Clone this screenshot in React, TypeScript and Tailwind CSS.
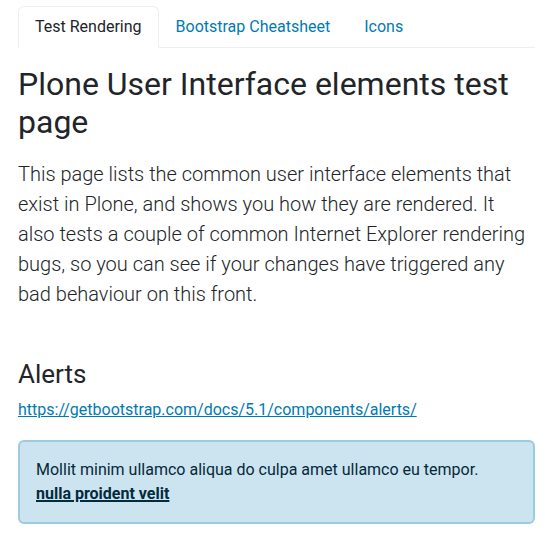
export default function App() {
  const tabs = ['Test Rendering', 'Bootstrap Cheatsheet', 'Icons'];
  return (
    <div className="min-h-screen bg-white pl-[18px] pr-[10px] pt-[6px] text-[#212529]" style={{ fontFamily: 'Roboto, "Liberation Sans", sans-serif' }}>
      {/* Tabs */}
      <ul className="flex border-b border-[#eeeeee]">
        {tabs.map((t, i) => (
          <li key={t} className="-mb-px">
            <a
              href="#"
              className={
                i === 0
                  ? 'block rounded-t-[6px] border border-[#eeeeee] border-b-white bg-white px-4 py-2 text-base leading-6 text-[#212529]'
                  : 'block border border-transparent px-4 py-2 text-base leading-6 text-[#007bb1]'
              }
            >
              {t}
            </a>
          </li>
        ))}
      </ul>

      <h1 className="mt-[17px] text-[32px] leading-[38px] font-normal text-[#212529]">
        Plone User Interface elements test page
      </h1>

      <p className="mt-[18px] text-[20px] leading-[30px] font-light text-[#212529]">
        This page lists the common user interface elements that exist in Plone, and shows you how they are rendered. It also
        tests a couple of common Internet Explorer rendering bugs, so you can see if your changes have triggered any bad
        behaviour on this front.
      </p>

      <h2 className="mt-[50px] text-[26px] leading-[31px] font-normal text-[#212529]">Alerts</h2>

      <p className="mt-[8px] text-base leading-6">
        <a href="#" className="text-[#007bb1] underline">
          https://getbootstrap.com/docs/5.1/components/alerts/
        </a>
      </p>

      <div className="mt-[18px] rounded-[6px] border-2 border-[#9ccbe0] bg-[#cce4ef] px-4 py-4 text-base leading-6 text-[#04293b]">
        Mollit minim ullamco aliqua do culpa amet ullamco eu tempor.
        <br />
        <a href="#" className="font-bold text-[#022b3e] underline decoration-2">
          nulla proident velit
        </a>
      </div>
    </div>
  );
}
